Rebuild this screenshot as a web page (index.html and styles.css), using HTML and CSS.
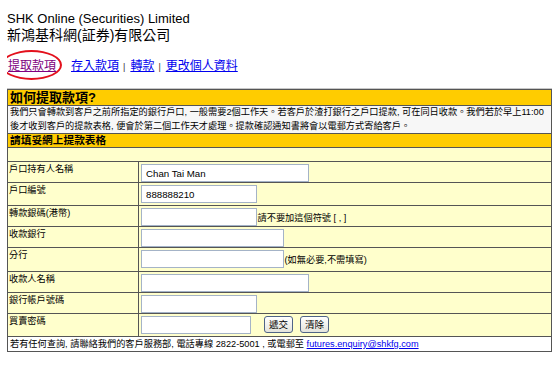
FILE: index.html
```html
<!DOCTYPE html>
<html lang="zh-Hant">
<head>
    <meta charset="UTF-8">
    <title>提取款項</title>
    <link rel="stylesheet" href="styles.css">
</head>
<body>
<div class="head">
    <div>SHK Online (Securities) Limited</div>
    <div class="zh">新鴻基科網(証券)有限公司</div>
</div>
<div class="links">
    <span class="current"><a href="#" class="visited">提取款項</a><span class="circle"></span></span>
    <a href="#" class="first">存入款項</a><span class="sep">|</span>
    <a href="#">轉款</a><span class="sep">|</span>
    <a href="#">更改個人資料</a>
</div>
<table class="form">
    <tr class="title"><td colspan="2">如何提取款項?</td></tr>
    <tr class="info"><td colspan="2">我們只會轉款到客戶之前所指定的銀行戶口, 一般需要2個工作天。若客戶於渣打銀行之戶口提款, 可在同日收款。我們若於早上11:00<br>後才收到客戶的提款表格, 便會於第二個工作天才處理。提款確認通知書將會以電郵方式寄給客戶。</td></tr>
    <tr class="sub"><td colspan="2">請填妥網上提款表格</td></tr>
    <tr class="blank"><td colspan="2"></td></tr>
    <tr class="row">
        <td class="label">戶口持有人名稱</td>
        <td class="field"><input type="text" class="long" value="Chan Tai Man"></td>
    </tr>
    <tr class="row tall">
        <td class="label">戶口編號</td>
        <td class="field"><input type="text" class="short" value="888888210"></td>
    </tr>
    <tr class="row">
        <td class="label">轉款銀碼(港幣)</td>
        <td class="field"><input type="text" class="short"> <span class="note">請不要加這個符號 [ , ]</span></td>
    </tr>
    <tr class="row">
        <td class="label">收款銀行</td>
        <td class="field"><input type="text" class="mid"></td>
    </tr>
    <tr class="row tall">
        <td class="label">分行</td>
        <td class="field"><input type="text" class="mid"> <span class="note">(如無必要,不需填寫)</span></td>
    </tr>
    <tr class="row">
        <td class="label">收款人名稱</td>
        <td class="field"><input type="text" class="long"></td>
    </tr>
    <tr class="row">
        <td class="label">銀行帳戶號碼</td>
        <td class="field"><input type="text" class="short"></td>
    </tr>
    <tr class="row tall">
        <td class="label">買賣密碼</td>
        <td class="field"><input type="password" class="pwd"><button type="submit" class="send">遞交</button><button type="reset">清除</button></td>
    </tr>
    <tr class="foot"><td colspan="2">若有任何查詢, 請聯絡我們的客戶服務部, 電話專線 2822-5001 , 或電郵至 <a href="#">futures.enquiry@shkfg.com</a></td></tr>
</table>
</body>
</html>
```

FILE: styles.css
```css
body {
    margin: 10px 7px;
    font-family: "Liberation Sans", Arial, "Noto Sans CJK TC", sans-serif;
    color: black;
    background: white;
}
.head {
    font-size: 13px;
    line-height: 17px;
}
.head .zh {
    font-size: 14px;
}
.links {
    display: flex;
    align-items: baseline;
    margin: 14px 0 14px;
    padding-left: 1px;
    font-size: 12px;
    line-height: 16px;
}
.links a {
    color: #0000ee;
}
.links a.visited {
    color: #800080;
}
.current {
    position: relative;
    margin-right: 15px;
}
.circle {
    position: absolute;
    left: -7px;
    top: -8px;
    width: 61px;
    height: 30px;
    box-sizing: border-box;
    border: 2px solid #e3101c;
    border-radius: 50%;
}
.sep {
    font-size: 9px;
    color: #333;
    margin: 0 5px 0 4px;
}
.form {
    width: 545px;
    border-collapse: collapse;
    border: 1px solid #666;
    box-shadow: 0 -1px 0 #c8c8c8;
    font-size: 9.2px;
}
.form td {
    border: 1px solid #555;
    padding: 0 2px;
}
.title td {
    background: #ffcc00;
    font-size: 13px;
    font-weight: bold;
    line-height: 15px;
    height: 15px;
}
.info td {
    background: #f7f7f7;
    line-height: 13.5px;
    height: 27px;
}
.sub td {
    background: #ffcc00;
    font-size: 10.7px;
    font-weight: bold;
    line-height: 13px;
    height: 13px;
}
.blank td {
    background: #ffffcc;
    height: 13px;
}
.row td {
    background: #ffffcc;
    height: 18px;
}
.row.tall td {
    height: 20.3px;
}
.row .label {
    width: 128px;
    padding: 1px 1px 0 1px;
    vertical-align: top;
    line-height: 12px;
}
.row .field {
    padding: 2px 0 0 2px;
    vertical-align: top;
}
input {
    box-sizing: border-box;
    height: 18px;
    margin: 0;
    padding: 0 4px;
    border: 1px solid #a4b3c7;
    font-family: "Liberation Sans", Arial, sans-serif;
    font-size: 9.7px;
    vertical-align: baseline;
}
.long { width: 168px; }
.mid { width: 143px; }
.short { width: 116px; }
.pwd { width: 110px; }
.note {
    margin-left: -2px;
}
button {
    height: 17px;
    margin-left: 7px;
    padding: 0 4px;
    border: 1px solid #4f6487;
    border-radius: 3px;
    background: linear-gradient(#ffffff, #e4e4dc);
    font-family: "Noto Sans CJK TC", sans-serif;
    font-size: 9.5px;
    line-height: 15px;
    vertical-align: top;
}
button.send {
    margin-left: 13px;
}
.foot td {
    background: white;
    line-height: 14px;
    height: 14px;
}
.foot a {
    color: #0000ee;
}
```
